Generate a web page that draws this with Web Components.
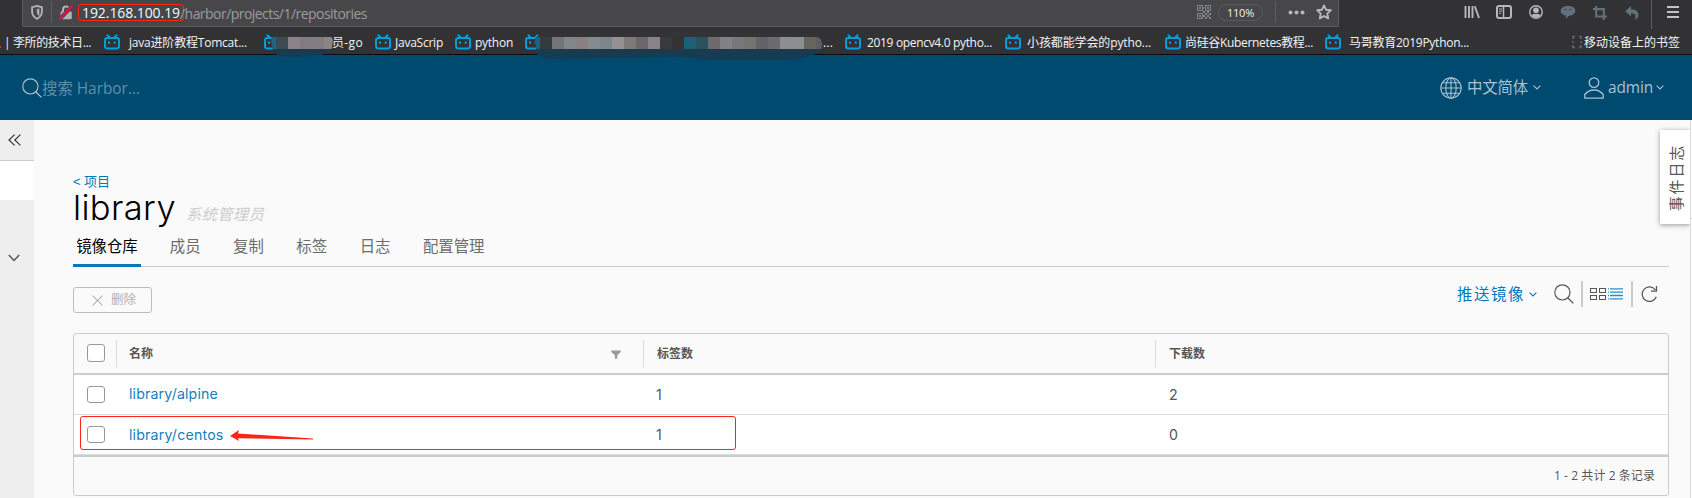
<!DOCTYPE html>
<html lang="zh-CN">
<head>
<meta charset="utf-8">
<title>Harbor</title>
<style>
html,body{margin:0;height:100%;overflow:hidden;background:#fafafa}
body{font-family:"Open Sans","Noto Sans CJK SC",sans-serif}
</style>
</head>
<body>
<harbor-window></harbor-window>
<script>
const define = (name, html, setup) => {
  const t = document.createElement('template');
  t.innerHTML = html;
  customElements.define(name, class extends HTMLElement {
    constructor() {
      super();
      this.attachShadow({mode: 'open'}).append(t.content.cloneNode(true));
    }
    connectedCallback() { if (setup) setup(this, this.shadowRoot); }
  });
};

/* A line of text tracked so that it fills the width given in "w". */
define('fit-text', `<style>:host{display:inline-block;white-space:pre;flex:none;line-height:1.4}span{display:inline-block}</style><span><slot></slot></span>`, (el, root) => {
  const w = parseFloat(el.getAttribute('w'));
  if (!w) return;
  const s = root.querySelector('span');
  const n = [...el.textContent].length;
  s.style.letterSpacing = ((w - s.getBoundingClientRect().width) / n) + 'px';
  el.style.width = w + 'px';
});

const ICONS = {
  shield: ['12 15', '<path d="M6 .9 10.9 2.3V6.6C10.9 10.6 8.4 12.7 6 13.8 3.6 12.7 1.1 10.6 1.1 6.6V2.3Z" fill="none" stroke="#b1b1b3" stroke-width="1.9"/><path d="M6 3.600V11.200C4.200 10 3.400 8.800 3.400 6.600V4.200Z" fill="#b1b1b3"  transform="translate(2.400 0)"/>'],
  lock: ['14 15', '<path d="M4 7V4.5C4 .6 10 .6 10 4.5V7" fill="none" stroke="#b1b1b3" stroke-width="2"/><rect x="1.5" y="6.5" width="11.3" height="7.7" rx="1.3" fill="#b1b1b3"/><path d="M.5 14.3 13.3 .8" stroke="#474749" stroke-width="4"/><path d="M.5 14.3 13.3 .8" stroke="#ee0a4d" stroke-width="2"/>'],
  qr: ['14 14', '<g fill="#7f8791"><path d="M0 0h6v6H0zM1 1v4h4V1zM8 0h6v6H8zM9 1v4h4V1zM0 8h6v6H0zM1 9v4h4V9z" fill-rule="evenodd"/><path d="M2 2h2v2H2zM10 2h2v2h-2zM2 10h2v2H2zM6 6h2v2H6zM8 8h2v2H8zM10 6h2v2h-2zM12 8h2v2h-2zM10 10h2v2h-2zM8 12h2v2H8zM12 12h2v2h-2zM6 10h2v2H6zM6 2h1v2H6z"/></g>'],
  dots: ['17 5', '<g fill="#b8b8ba"><circle cx="2.5" cy="2.5" r="2"/><circle cx="8.5" cy="2.5" r="2"/><circle cx="14.5" cy="2.5" r="2"/></g>'],
  star: ['16 16', '<path d="M8 1.4 10 5.7 14.8 6.3 11.3 9.6 12.2 14.4 8 12 3.8 14.4 4.7 9.6 1.2 6.3 6 5.7Z" fill="none" stroke="#b8b8ba" stroke-width="1.9" stroke-linejoin="round"/>'],
  library: ['16 14', '<path d="M1.5 1v12M5 1v12M8.5 1v12M10.8 1.2 15 13" stroke="#b8b8ba" stroke-width="1.9"/>'],
  sidebar: ['16 14', '<rect x="1" y="1" width="14" height="12" rx="2" fill="none" stroke="#b8b8ba" stroke-width="2"/><path d="M7.5 1v12" stroke="#b8b8ba" stroke-width="1.5"/><path d="M3 4h3M3 6.2h3M3 8.4h2" stroke="#b8b8ba"/>'],
  account: ['14 14', '<circle cx="7" cy="7" r="6.2" fill="none" stroke="#b8b8ba" stroke-width="1.4"/><circle cx="7" cy="5.3" r="2.9" fill="#b8b8ba"/><path d="M2.6 10C4 8.6 5 9 7 9s3 -.4 4.4 1C10 12 8.500 12.500 7 12.500S4 12 2.600 10Z" fill="#b8b8ba"/>'],
  wechat: ['16 14', '<path d="M8 1c4 0 7.300 2 7.300 4.800S13 10 10.500 10.600C9 11 8 11.500 6 13.500L5.800 10.500C3 10 .7 8.500 .7 5.800S4 1 8 1Z" fill="#63707b"/><circle cx="5.500" cy="4.500" r=".8" fill="#323234"/><circle cx="10.300" cy="4.500" r=".8" fill="#323234"/>'],
  crop: ['14 14', '<path d="M3.200 0V10.500H14M0 3.200H10.800V14" fill="none" stroke="#63707b" stroke-width="2.200"/>'],
  undo: ['14 14', '<path d="M6 0v3.200c5 0 7.500 2.300 7.500 6C13.500 11 12 13 9.500 13.500 11.500 10.500 11 7.300 6 7.300V10.500L.2 5.200Z" fill="#63707b"/>'],
  menu: ['12 12', '<path d="M0 1h12M0 6h12M0 11h12" stroke="#c2c2c4" stroke-width="2"/>'],
  bili: ['16 16', '<path d="M3.400 1.200 5.400 3.200M12.600 1.200 10.600 3.200" stroke="#009fdc" stroke-width="2" stroke-linecap="round"/><rect x="1" y="4" width="14" height="10.500" rx="2.300" fill="none" stroke="#009fdc" stroke-width="2"/><path d="M5 7.500v2.200M10.700 7.500v2.200" stroke="#009fdc" stroke-width="2"/>'],
  phone: ['10 14', '<path d="M1 4V1.500h2M7 1.500h2V4M1 10v2.500h2M7 12.500h2V10M1 6v2M9 6v2" fill="none" stroke="#5d6770" stroke-width="1.500"/>'],
  search: ['20 20', '<circle cx="8.400" cy="8.400" r="7.600" fill="none" stroke="currentColor" stroke-width="1.150"/><path d="M13.700 13.700 19.400 19.400" stroke="currentColor" stroke-width="1.300"/>'],
  globe: ['22 22', '<g fill="none" stroke="currentColor" stroke-width="1.100"><circle cx="11" cy="11" r="10.200"/><ellipse cx="11" cy="11" rx="5.200" ry="10.200"/><path d="M11 1v20M1 11h20M2.500 5.700h17M2.500 16.300h17"/></g>'],
  user: ['20 22', '<g fill="none" stroke="currentColor" stroke-width="1.300"><circle cx="10" cy="5.600" r="4.800"/><path d="M.8 21.200V17.500C3 14.700 6 13 10 13s7 1.700 9.200 4.500v3.700Z" stroke-linejoin="round"/></g>'],
  caret: ['8 5', '<path d="M.6 .6 4 4 7.400 .6" fill="none" stroke="currentColor" stroke-width="1.100"/>'],
  angle: ['12 8', '<path d="M.8 1 6 6.500 11.200 1" fill="none" stroke="#565656" stroke-width="1.500"/>'],
  collapse: ['13 12', '<path d="M6.600 .6 1 6 6.600 11.400M12.400 .6 6.800 6 12.400 11.400" fill="none" stroke="#333" stroke-width="1.200"/>'],
  times: ['11 11', '<path d="M.7 .7 10.300 10.300M10.300 .7 .7 10.300" stroke="#b0b0b0" stroke-width="1.100"/>'],
  filter: ['10 9', '<path d="M.3 .5h9.400v1.400L6.300 5.200V8.700H3.900V5.200L.3 1.900Z" fill="#999"/>'],
  cards: ['16 12', '<g fill="none" stroke="#565656"><rect x=".5" y=".5" width="6" height="4"/><rect x="9.500" y=".5" width="6" height="4"/><rect x=".5" y="7.500" width="6" height="4"/><rect x="9.500" y="7.500" width="6" height="4"/></g>'],
  list: ['15 12', '<path d="M0 .9h1M0 4.200h1M0 7.500h1M0 10.800h1M2 .9h13M2 4.200h13M2 7.500h13M2 10.800h13" stroke="#2a8fc5" stroke-width="1.300"/>'],
  refresh: ['17 18', '<path d="M14.400 4.800A7.300 7.300 0 1 0 15.300 11.800M15.500 1V6.200H10" fill="none" stroke="#565656" stroke-width="1.250"/>']
};
define('ui-icon', `<style>:host{display:inline-block;flex:none}svg{display:block;overflow:visible}</style><svg xmlns="http://www.w3.org/2000/svg"></svg>`, (el, root) => {
  const [box, body] = ICONS[el.getAttribute('name')];
  const [w, h] = box.split(' ');
  const svg = root.querySelector('svg');
  svg.setAttribute('viewBox', `0 0 ${box}`);
  svg.setAttribute('width', w);
  svg.setAttribute('height', h);
  svg.innerHTML = body;
});

define('address-bar', `<style>
:host{display:flex;height:27px;background:#323234;color:#f0f0f2;align-items:flex-start}
.url{box-sizing:border-box;margin-left:22px;width:1317px;height:27px;background:#474749;border:1px solid #5c5c5f;border-top:0;border-radius:0 0 2px 2px;display:flex;align-items:flex-start}
.url>*,.tools>*{margin-top:var(--t,0)}
.sep{width:1px;background:#5f5f63;height:22px}
.host{box-sizing:border-box;border:1.500px solid #fb2416;border-radius:3px;height:17px;width:106px;margin:4px 0 0 5px;font-size:14px;display:flex;align-items:center;padding-left:3px;color:#f9f9fa}
.path{color:#9b9b9e;font-size:14px}
.zoom{box-sizing:border-box;width:45px;height:17px;border:1px solid #5b5b5e;border-radius:9px;font-size:11px;display:flex;align-items:center;justify-content:center;margin:4px 0 0 7px}
.tools{display:flex;flex:1;align-items:flex-start}
</style>
<div class="url">
<ui-icon name="shield" style="--t:5px;margin-left:8px"></ui-icon><i class="sep" style="--t:1px;margin-left:8px"></i>
<ui-icon name="lock" style="--t:5px;margin-left:7px"></ui-icon>
<span class="host"><fit-text w="98">192.168.100.19</fit-text></span>
<fit-text class="path" w="187" style="--t:4px;margin-left:-4px">/harbor/projects/1/repositories</fit-text>
<span style="flex:1"></span>
<ui-icon name="qr" style="--t:5px"></ui-icon><span class="zoom"><fit-text w="27">110%</fit-text></span>
<i class="sep" style="--t:1px;margin-left:12px"></i>
<ui-icon name="dots" style="--t:10px;margin-left:12px"></ui-icon><ui-icon name="star" style="margin:4px 6px 0 11px"></ui-icon>
</div>
<div class="tools">
<ui-icon name="library" style="--t:5px;margin-left:125px"></ui-icon>
<ui-icon name="sidebar" style="--t:5px;margin-left:16px"></ui-icon>
<ui-icon name="account" style="--t:5px;margin-left:17px"></ui-icon>
<ui-icon name="wechat" style="--t:5px;margin-left:17px"></ui-icon>
<ui-icon name="crop" style="--t:6px;margin-left:17px"></ui-icon>
<ui-icon name="undo" style="--t:6px;margin-left:18px"></ui-icon>
<i class="sep" style="margin-left:12px;height:29px;position:relative;z-index:2"></i>
<ui-icon name="menu" style="--t:6px;margin-left:15px"></ui-icon>
</div>`);

define('bookmark-item', `<style>:host{display:flex;align-items:center;flex:none;height:27px}fit-text{font-size:12px;margin-left:var(--gap,4px);margin-top:2px}</style>`, (el, root) => {
  const icon = document.createElement('ui-icon');
  icon.setAttribute('name', el.getAttribute('icon') || 'bili');
  const label = document.createElement('fit-text');
  label.textContent = el.getAttribute('label');
  label.setAttribute('w', el.getAttribute('w'));
  root.append(icon, label);
});

define('redacted-strip', `<style>:host{display:block;position:absolute;z-index:3}svg{display:block;overflow:visible}</style><svg xmlns="http://www.w3.org/2000/svg" width="1" height="1"></svg>`, (el, root) => {
  const outline = el.getAttribute('outline');
  const cells = el.getAttribute('cells').split(' ').map((c, i) => `<rect x="${i * 12 + +el.getAttribute('from')}" y="10" width="12.05" height="12" fill="${c}"/>`).join('');
  root.querySelector('svg').innerHTML = `<defs><clipPath id="c"><path d="${outline}"/></clipPath></defs><g clip-path="url(#c)"><rect width="300" height="28" fill="#343436"/><rect y="22" width="300" height="5" fill="#1d3a4c"/><rect y="26" width="300" height="10" fill="#153c54"/>${cells}</g>`;
});

define('bookmarks-bar', `<style>
:host{display:flex;position:relative;height:28px;box-sizing:border-box;border-bottom:1px solid #0c0c0d;background:#323234;color:#f4f4f6;align-items:center;padding-top:3px}
.lead{font-size:12px;margin-left:4px;margin-top:2px}
.frag{position:absolute;left:0;top:19px;width:1px;height:2px;background:#c43c31}
</style>
<i class="frag"></i><fit-text class="lead" w="87">| 李所的技术日...</fit-text>
<bookmark-item label="java进阶教程Tomcat..." w="118" style="--gap:9px;margin-left:13px"></bookmark-item>
<bookmark-item label="员-go" w="31" style="--gap:52px;margin-left:17px"></bookmark-item>
<bookmark-item label="JavaScrip" w="48" style="margin-left:12px"></bookmark-item>
<bookmark-item label="python" w="38" style="margin-left:12px"></bookmark-item>
<bookmark-item label="..." w="10" style="--gap:282px;margin-left:12px"></bookmark-item>
<bookmark-item label="2019 opencv4.0 pytho..." w="125" style="--gap:6px;margin-left:12px"></bookmark-item>
<bookmark-item label="小孩都能学会的pytho..." w="124" style="--gap:6px;margin-left:13px"></bookmark-item>
<bookmark-item label="尚硅谷Kubernetes教程..." w="128" style="margin-left:14px"></bookmark-item>
<bookmark-item label="马哥教育2019Python..." w="120" style="--gap:8px;margin-left:12px"></bookmark-item>
<bookmark-item icon="phone" label="移动设备上的书签" w="96" style="--gap:2px;margin-left:103px"></bookmark-item>
<redacted-strip style="left:271px;top:0" from="-7" cells="#1d6580 #3a4b52 #8b8387 #827b84 #837d82 #8a8488" outline="M0 12Q2 7 12 6L46 4Q60 5 62 13L61 21Q58 27 48 28L30 30Q10 31 5 27Q1 24 0 12Z"></redacted-strip>
<redacted-strip style="left:535px;top:0" from="-7" cells="#1b6484 #343b3f #737579 #818789 #898181 #848a8d #7d868a #969092 #7c7b77 #6a666c #898389 #3a393c #343235 #1b6179 #2a525e #6d6b70 #808283 #77777c #73736f #626267 #6c6c6e #8c8f8f #8b8f8f #65645f #5e5d60" outline="M0 12Q2 7 14 7L60 6L150 5L262 6Q282 7 286 13Q290 23 280 27Q270 32 250 33L180 33Q165 32 148 30L70 31L20 32Q8 32 2 27Z"></redacted-strip>`);

define('harbor-header', `<style>
:host{display:flex;height:65px;background:#004a70;color:#a9c2cf;align-items:center}
.ph{color:#5f90aa;font-size:15.400px;margin-top:3px}
.m{font-size:15.400px;margin-top:1px}
</style>
<ui-icon name="search" style="margin-left:22px"></ui-icon><fit-text class="ph" w="98">搜索 Harbor...</fit-text>
<span style="flex:1"></span>
<ui-icon name="globe"></ui-icon><fit-text class="m" w="61" style="margin-left:5px">中文简体</fit-text><ui-icon name="caret" style="margin-left:5px"></ui-icon>
<ui-icon name="user" style="margin:1px 0 0 43px"></ui-icon><fit-text class="m" w="45" style="margin-left:4px">admin</fit-text><ui-icon name="caret" style="margin:0 28px 0 3px"></ui-icon>`);

define('side-rail', `<style>
:host{display:flex;flex-direction:column;width:34px;flex:none;background:#eee}
.top{height:40px;border-bottom:1px solid #ccc;display:flex;align-items:center}
.cur{height:39px;background:#fff}
.next{padding:54px 0 0 8px;line-height:0}
</style><div class="top"><ui-icon name="collapse" style="margin-left:8px"></ui-icon></div><div class="cur"></div><div class="next"><ui-icon name="angle"></ui-icon></div>`);

define('tab-item', `<style>:host{display:block;flex:none;font-size:15.400px;color:#6c6c6c;margin-right:32.500px}:host([active]){color:#000;box-shadow:0 3px #0079b8;padding:0 3.200px;margin:0 28.800px 0 0}div{height:41px;display:flex;align-items:center}</style><div><slot></slot></div>`);
define('tab-bar', `<style>:host{display:flex;height:41px;border-bottom:1px solid #ccc}tab-item{height:39px}</style>
<tab-item active>镜像仓库</tab-item><tab-item>成员</tab-item><tab-item>复制</tab-item><tab-item>标签</tab-item><tab-item>日志</tab-item><tab-item>配置管理</tab-item>`);

define('project-title', `<style>
:host{display:block;height:102px;box-sizing:border-box;padding-top:53px}
.back{font-family:"Liberation Sans","Noto Sans CJK SC",sans-serif;font-size:13px;color:#0079b8;height:18px;line-height:18px}
.row{display:flex;align-items:baseline;height:34px}
.name{font-family:Inter,sans-serif;font-weight:300;font-size:34.500px;color:#000;line-height:34px}
.role{font-size:15.400px;font-style:italic;color:#ccc;margin-left:10px}
</style><div class="back"><fit-text w="37" style="line-height:18px">&lt; 项目</fit-text></div><div class="row"><fit-text class="name" w="103">library</fit-text><fit-text class="role" w="78">系统管理员</fit-text></div>`);

define('action-bar', `<style>
:host{display:flex;height:66px;align-items:flex-start}
.del{box-sizing:border-box;margin-top:20px;width:79px;height:26px;border:1px solid #bdbdbd;border-radius:3px;display:flex;align-items:center;padding-left:18px;color:#b0b0b0;font-size:12.500px}
.right{display:flex;align-items:center;height:26px;margin-top:14px;margin-left:auto;color:#565656}
.push{color:#0079b8;font-size:15.400px;margin-top:1px}
.bar{width:2px;height:26px;background:#ccc}
</style><div class="del"><ui-icon name="times"></ui-icon><fit-text w="25" style="margin-left:8px">删除</fit-text></div>
<div class="right"><fit-text class="push" w="68">推送镜像</fit-text><ui-icon name="caret" style="color:#0079b8;margin-left:4px"></ui-icon>
<ui-icon name="search" style="margin-left:17px"></ui-icon><i class="bar" style="margin-left:7px"></i>
<ui-icon name="cards" style="margin-left:7px"></ui-icon><ui-icon name="list" style="margin-left:2px"></ui-icon><i class="bar" style="margin-left:8px"></i>
<ui-icon name="refresh" style="margin:0 11px 0 8px"></ui-icon></div>`);

define('check-box', `<style>:host{display:block;box-sizing:border-box;width:18px;height:18px;border:1px solid #999;border-radius:3px;background:#fff;flex:none}</style>`);

define('repo-row', `<style>
:host{display:grid;grid-template-columns:42px 527px 512px 1fr;height:40px;box-sizing:border-box;border-bottom:1px solid #ddd;background:#fff;color:#565656;font-family:Inter,sans-serif;font-size:14.200px;align-items:center}
check-box{margin-left:13px;height:17px}.c{padding-left:13px}
.name{color:#1580bb}
</style><check-box></check-box><span class="c name"><slot name="name"></slot></span><span class="c"><slot name="tags"></slot></span><span class="c" style="padding-left:14px"><slot name="pulls"></slot></span>`);

define('repo-grid', `<style>
:host{display:block;box-sizing:border-box;height:163px;border:1px solid #ccc;border-radius:3px;background:#fafafa;position:relative;color:#565656}
.head{display:grid;grid-template-columns:42px 527px 512px 1fr;height:39px;border-bottom:2px solid #ccc;font-size:12px;font-weight:700;align-items:center}
.head check-box{margin-left:13px;margin-top:-1px}
.h{box-sizing:border-box;height:27px;border-left:1px solid #ddd;padding:0 0 2px 13px;display:flex;align-items:center;justify-content:space-between}
.h ui-icon{margin-right:22px;margin-top:3px}
.foot{height:38px;border-top:2px solid #ccc;display:flex;align-items:center;justify-content:flex-end;padding-right:13px;font-size:12px}
.mark{position:absolute;left:6px;top:82px;width:656px;height:34px;box-sizing:border-box;border:1px solid #fb2416;border-radius:3px}
.arrow{position:absolute;left:156px;top:95px}
fit-text{line-height:20px}
</style>
<div class="head"><check-box></check-box><span class="h" style="padding-left:12px">名称<ui-icon name="filter"></ui-icon></span><span class="h">标签数</span><span class="h">下载数</span></div>
<repo-row><fit-text slot="name" w="89" style="margin-top:-1px">library/alpine</fit-text><span slot="tags">1</span><span slot="pulls">2</span></repo-row>
<repo-row><fit-text slot="name" w="94.500">library/centos</fit-text><span slot="tags">1</span><span slot="pulls">0</span></repo-row>
<div class="foot"><fit-text w="101" style="margin-top:-1px">1 - 2 共计 2 条记录</fit-text></div>
<div class="mark"></div>
<svg class="arrow" width="84" height="13"><path d="M0 7 9 1 8 4.500 83 9.600V10.600L8 9.200 9 12Z" fill="#fb2416"/></svg>`);

define('event-tab', `<style>
:host{position:absolute;right:0;top:10px;width:30px;height:94px;background:#fff;box-shadow:0 1px 5px rgba(0,0,0,.4);clip-path:inset(-8px 0 -8px -8px);display:flex;align-items:center;justify-content:center;color:#565656;font-size:15px}
span{writing-mode:vertical-rl;text-orientation:sideways;transform:rotate(180deg);letter-spacing:1.800px;line-height:20px;margin:2px 0 0 1px}
</style><span><slot></slot></span>`);

define('harbor-window', `<style>
:host{display:flex;flex-direction:column;height:498px;width:1692px;overflow:hidden}
.body{display:flex;flex:1;background:#fafafa}
main{flex:1;position:relative;padding:0 21px 0 39px;border-right:1px solid #ddd}
.edge{width:1px;display:flex;align-items:flex-start}
.edge i{width:1px;height:1px;background:#ccc;margin-top:98px}
</style>
<address-bar></address-bar><bookmarks-bar></bookmarks-bar><harbor-header></harbor-header>
<div class="body"><side-rail></side-rail><main>
<project-title></project-title>
<div style="height:3px"></div>
<tab-bar></tab-bar>
<action-bar></action-bar>
<repo-grid></repo-grid>
<event-tab>事件日志</event-tab>
</main><div class="edge"><i></i></div></div>`);
</script>
</body>
</html>
